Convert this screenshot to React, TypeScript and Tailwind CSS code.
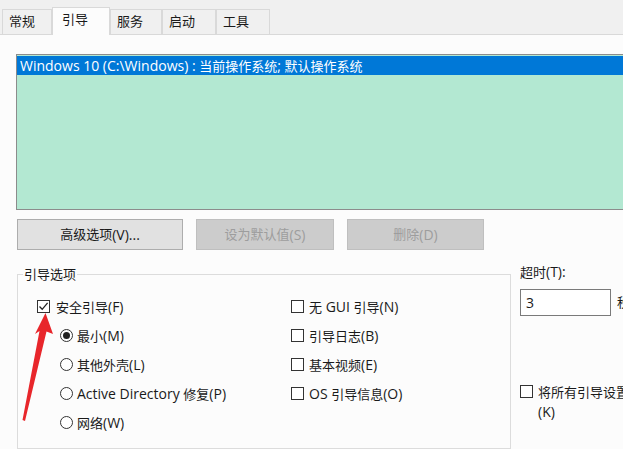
import React from 'react';

const font = { fontFamily: '"Open Sans", "Noto Sans CJK SC", sans-serif' };

// CJK runs render a touch smaller than the Latin text, as in the dialog font
function T({ children }: { children: string }) {
  const parts = children.split(/([\u3000-\u9fff\uff00-\uffef]+)/);
  return (
    <>
      {parts.map((p, i) =>
        /[\u3000-\u9fff\uff00-\uffef]/.test(p) ? (
          <span key={i} className="text-[13px]">{p}</span>
        ) : (
          <span key={i}>{p}</span>
        )
      )}
    </>
  );
}

function CheckBox({ checked = false }: { checked?: boolean }) {
  return (
    <span className="w-[13px] h-[13px] shrink-0 border border-[#333333] bg-white flex items-center justify-center">
      {checked && (
        <svg width="11" height="11" viewBox="0 0 11 11">
          <path d="M1.5 5.5 L4.2 8.3 L9.6 1.8" fill="none" stroke="#222" strokeWidth="1.3" />
        </svg>
      )}
    </span>
  );
}

function Radio({ checked = false }: { checked?: boolean }) {
  return (
    <span className="w-[13px] h-[13px] shrink-0 rounded-full border border-[#333333] bg-white flex items-center justify-center">
      {checked && <span className="w-[7px] h-[7px] rounded-full bg-[#222]" />}
    </span>
  );
}

export default function App() {
  const tabs = [
    { name: '常规', w: 'w-[50px]', active: false },
    { name: '引导', w: 'w-[58px]', active: true },
    { name: '服务', w: 'w-[52px]', active: false },
    { name: '启动', w: 'w-[54px]', active: false },
    { name: '工具', w: 'w-[54px]', active: false },
  ];

  return (
    <div className="relative w-[623px] h-[449px] overflow-hidden bg-[#fcfcfc] text-[14px] text-[#1a1a1a]" style={font}>
      {/* Tab strip */}
      <div className="h-[35px] bg-[#f0f0f0] border-b border-[#d9d9d9] flex items-end pl-[2px] text-[13px]">
        {tabs.map((t) =>
          t.active ? (
            <div
              key={t.name}
              className={`${t.w} h-[28px] -mb-px relative bg-[#fcfcfc] border border-b-0 border-[#d9d9d9] pl-[9px] pb-[4px] flex items-center`}
            >
              {t.name}
            </div>
          ) : (
            <div
              key={t.name}
              className={`${t.w} h-[25px] bg-[#f0f0f0] border border-b-0 border-[#d9d9d9] pl-[6px] flex items-center`}
            >
              {t.name}
            </div>
          )
        )}
      </div>

      <div className="pl-[16px] pt-[19px]">
        {/* OS list */}
        <div className="w-[640px] h-[156px] border border-[#8c8c8c] bg-[#b3e8d2] pt-[1px]">
          <div className="h-[19px] bg-[#0078d7] text-white pl-[3px] leading-[19px] whitespace-nowrap">
            <T>{'Windows 10 (C:\\Windows) : 当前操作系统; 默认操作系统'}</T>
          </div>
        </div>

        {/* Buttons */}
        <div className="flex gap-[13px] mt-[9px] ml-px">
          <div className="w-[166px] h-[31px] bg-[#e1e1e1] border border-[#adadad] flex items-center justify-center">
            <T>高级选项(V)...</T>
          </div>
          <div className="w-[138px] h-[31px] bg-[#cccccc] border border-[#bfbfbf] text-[#9d9d9d] flex items-center justify-center">
            <T>设为默认值(S)</T>
          </div>
          <div className="w-[137px] h-[31px] bg-[#cccccc] border border-[#bfbfbf] text-[#9d9d9d] flex items-center justify-center">
            <T>删除(D)</T>
          </div>
        </div>

        <div className="flex ml-px">
          {/* Boot options group */}
          <fieldset className="w-[494px] h-[184px] shrink-0 mt-[15px] border border-[#dcdcdc] p-0">
            <legend className="ml-[5px] px-px leading-[18px] text-[13px]">引导选项</legend>
            <div className="flex pt-[9px]">
              <div className="w-[273px] pl-[19px]">
                <div className="h-[29px] flex items-center gap-[6px]">
                  <CheckBox checked />
                  <span><T>安全引导(F)</T></span>
                </div>
                <div className="pl-[23px]">
                  <div className="h-[29px] flex items-center gap-[4px]">
                    <Radio checked />
                    <span><T>最小(M)</T></span>
                  </div>
                  <div className="h-[29px] flex items-center gap-[4px]">
                    <Radio />
                    <span><T>其他外壳(L)</T></span>
                  </div>
                  <div className="h-[29px] flex items-center gap-[4px]">
                    <Radio />
                    <span><T>Active Directory 修复(P)</T></span>
                  </div>
                  <div className="h-[29px] flex items-center gap-[4px]">
                    <Radio />
                    <span><T>网络(W)</T></span>
                  </div>
                </div>
              </div>
              <div>
                <div className="h-[29px] flex items-center gap-[5px]">
                  <CheckBox />
                  <span><T>无 GUI 引导(N)</T></span>
                </div>
                <div className="h-[29px] flex items-center gap-[5px]">
                  <CheckBox />
                  <span><T>引导日志(B)</T></span>
                </div>
                <div className="h-[29px] flex items-center gap-[5px]">
                  <CheckBox />
                  <span><T>基本视频(E)</T></span>
                </div>
                <div className="h-[29px] flex items-center gap-[5px]">
                  <CheckBox />
                  <span><T>OS 引导信息(O)</T></span>
                </div>
              </div>
            </div>
          </fieldset>

          {/* Timeout column */}
          <div className="ml-[9px] pt-[13px] w-[200px] shrink-0">
            <div className="leading-[18px]"><T>超时(T):</T></div>
            <div className="flex items-center mt-[8px]">
              <div className="w-[91px] h-[27px] border border-[#7a7a7a] bg-white pl-[5px] flex items-center">3</div>
              <span className="ml-[6px] text-[13px]">秒</span>
            </div>
            <div className="flex items-start gap-[5px] mt-[66px]">
              <span className="mt-[3px]">
                <CheckBox />
              </span>
              <span className="leading-[19px] whitespace-nowrap">
                <T>将所有引导设置设为永久</T>
                <br />
                (K)
              </span>
            </div>
          </div>
        </div>
      </div>

      {/* Red annotation arrow */}
      <svg className="absolute left-0 top-0 pointer-events-none" width="623" height="449" viewBox="0 0 623 449">
        <polygon
          points="45.5,313 53,334 46.5,331.5 25,421 22.5,420 39.5,331 35,334"
          fill="#e8262b"
        />
      </svg>
    </div>
  );
}
